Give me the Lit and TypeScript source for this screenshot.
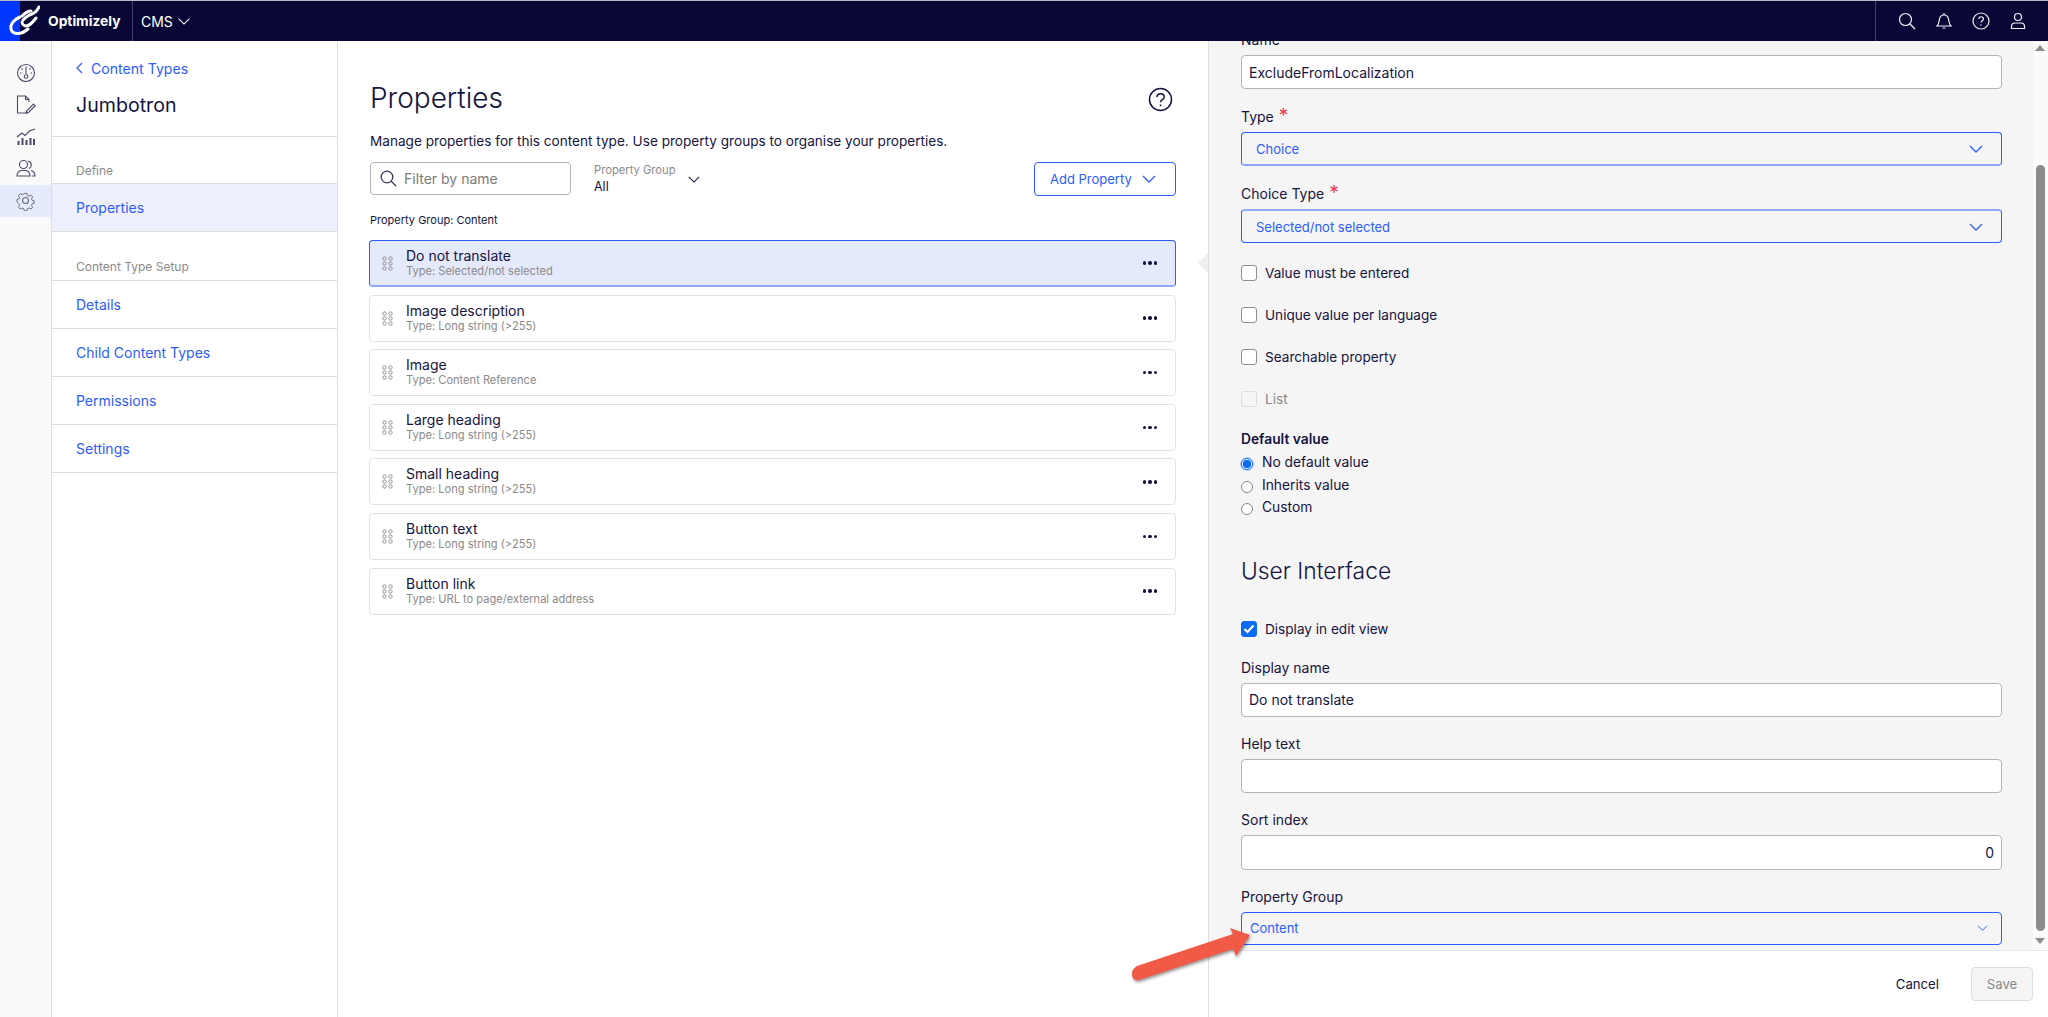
import { LitElement, css, html, svg } from "lit";
import { customElement } from "lit/decorators.js";

const rows = [
  ["Do not translate", "Type: Selected/not selected"],
  ["Image description", "Type: Long string (>255)"],
  ["Image", "Type: Content Reference"],
  ["Large heading", "Type: Long string (>255)"],
  ["Small heading", "Type: Long string (>255)"],
  ["Button text", "Type: Long string (>255)"],
  ["Button link", "Type: URL to page/external address"],
];

const chevron = (w: number, h: number) => html`<svg width=${w} height=${h} viewBox="0 0 14 8" fill="none" stroke="currentColor" stroke-width="1.3"><path d="M1 1l6 6 6-6" /></svg>`;

const railIcons = [
  svg`<circle cx="10" cy="10" r="8.5" /><path d="M10 3.500v7.500M4 10h1.500M14.500 10H16M5.500 5.500l1 1M14.500 5.500l-1 1" /><circle cx="10" cy="13.500" r="1.800" />`,
  svg`<path d="M13 7V4.500L9.500 1H1.500v17H12M9.500 1v3.500H13" /><path d="M11 15.500l-.8 2.500 2.500-.8 6.500-6.500-1.700-1.700z" />`,
  svg`<path d="M1 10l5-4 3 2.500L13.500 4 19 2" /><path d="M2.500 18v-4M6.500 18v-7M10.500 18v-5M14.500 18v-7M18 18v-6" stroke-width="2" />`,
  svg`<circle cx="7.500" cy="5.500" r="4" /><path d="M1 17c0-3.500 2-5 4-5.500h5c2 .5 4 2 4 5.500z" /><path d="M12 2a4 4 0 0 1 1 7.500M15 11.500c2 .5 4 2 4 5.500h-3" />`,
  svg`<circle cx="9.500" cy="9.500" r="3" /><path d="M8 1.500h3l.5 2.400 1.800.8 2.100-1.300 2 2.100-1.300 2 .8 1.800 2.100.5v2.800l-2.100.5-.8 1.800 1.300 2-2 2.100-2.100-1.300-1.800.8-.5 2.400H8l-.5-2.400-1.800-.8-2.100 1.300-2-2.100 1.300-2-.8-1.800L0 11V8.200l2.100-.5.8-1.800-1.300-2 2-2.100 2.100 1.300 1.800-.8z" transform="translate(1 1) scale(.9)" />`,
];

@customElement("app-root")
export class AppRoot extends LitElement {
  static styles = css`
    :host {
      display: flex;
      flex-direction: column;
      width: 2048px;
      height: 1017px;
      overflow: hidden;
      position: relative;
      font-family: Inter, "Noto Sans", sans-serif;
      font-size: 14px;
      color: #15143f;
      background: #fff;
    }

    svg {
      display: block;
      flex: none;
    }

    .topbar {
      flex: none;
      height: 40px;
      display: flex;
      align-items: center;
      background: #080736;
      border-top: 1px solid #b9b9c4;
      color: #fff;
    }

    .logo {
      width: 133px;
      height: 40px;
      display: flex;
      align-items: center;
      gap: 8px;
      background: linear-gradient(to right, #0037ff 20px, transparent 20px);
      border-right: 1px solid #45446a;
      box-sizing: border-box;
      font-weight: 700;
      font-size: 13.8px;
    }

    .product {
      display: flex;
      align-items: center;
      gap: 5px;
      margin-left: 8px;
      font-size: 14px;
    }

    .tools {
      margin-left: auto;
      height: 40px;
      width: 173px;
      box-sizing: border-box;
      border-left: 1px solid #45446a;
      display: flex;
      align-items: center;
      padding-left: 22px;
      gap: 19px;
      color: #f2f2f6;
    }

    .body {
      flex: 1;
      display: flex;
      min-height: 0;
    }

    .rail {
      flex: none;
      width: 52px;
      box-sizing: border-box;
      padding-top: 16px;
      background: #fafafa;
      border-right: 1px solid #dedede;
      color: #4a4a68;
    }

    .rail-item {
      height: 32px;
      display: flex;
      align-items: center;
      justify-content: center;
    }

    .rail-item.active {
      background: #e6ebfb;
      color: #6a6a80;
    }

    .side {
      flex: none;
      width: 286px;
      box-sizing: border-box;
      border-right: 1px solid #dedede;
    }

    .side-head {
      height: 96px;
      box-sizing: border-box;
      padding: 17px 24px 0 24px;
      border-bottom: 1px solid #dedede;
    }

    .back {
      display: flex;
      align-items: center;
      gap: 8px;
      height: 20px;
      color: #2d5cff;
      font-size: 14.1px;
    }

    .side-title {
      margin-top: 14px;
      font-size: 19.6px;
      line-height: 26px;
    }

    .side-label {
      height: 47px;
      box-sizing: border-box;
      padding: 26px 24px 0;
      font-size: 12px;
      line-height: 16px;
      color: #8a8a8a;
      border-bottom: 1px solid #dedede;
    }

    .side-label.second {
      margin-top: 23px;
      height: 26px;
      padding-top: 4px;
    }

    .side-link {
      height: 48px;
      box-sizing: border-box;
      display: flex;
      align-items: center;
      padding: 0 24px;
      color: #2d5cff;
      font-size: 14px;
      border-bottom: 1px solid #dedede;
    }

    .side-link.active {
      background: #eef1fd;
    }

    .main {
      flex: none;
      width: 870px;
      box-sizing: border-box;
      padding: 38px 32px 0 32px;
      position: relative;
    }

    .head {
      display: flex;
      align-items: center;
      justify-content: space-between;
      height: 40px;
    }

    h1 {
      margin: -2px 0 0;
      font-size: 28px;
      font-weight: 300;
      line-height: 40px;
    }

    .help {
      margin-right: 3px;
      color: #15143f;
    }

    .lead {
      margin-top: 12px;
      line-height: 20px;
      font-size: 13.6px;
    }

    .toolbar {
      margin-top: 11px;
      height: 34px;
      display: flex;
      align-items: flex-start;
    }

    .filter {
      width: 201px;
      height: 33px;
      box-sizing: border-box;
      border: 1px solid #b5b5b5;
      border-radius: 4px;
      display: flex;
      align-items: center;
      gap: 7px;
      padding-left: 9px;
      color: #7b7b7b;
      font-size: 14px;
    }

    .filter svg {
      color: #3a3a5c;
    }

    .group {
      margin-left: 23px;
      height: 34px;
      display: flex;
      align-items: center;
      gap: 12px;
    }

    .group small {
      display: block;
      font-size: 11.2px;
      line-height: 16px;
      color: #8a8a8a;
      margin-top: -1px;
    }

    .group span {
      display: block;
      font-size: 12.5px;
      line-height: 16px;
      margin-top: 1px;
    }

    .add {
      margin-left: auto;
      width: 142px;
      height: 34px;
      box-sizing: border-box;
      border: 1px solid #2d5cff;
      border-radius: 4px;
      display: flex;
      align-items: center;
      padding-left: 15px;
      gap: 10px;
      color: #2d5cff;
      font-size: 13px;
    }

    .group-title {
      margin-top: 16px;
      font-size: 11px;
      line-height: 16px;
    }

    .list {
      margin: 12px 0 0 -1px;
      display: flex;
      flex-direction: column;
      gap: 7.6px;
    }

    .row {
      height: 47px;
      box-sizing: border-box;
      display: flex;
      align-items: center;
      border: 1px solid #e2e2e2;
      border-radius: 4px;
      padding: 0 12px;
    }

    .row.selected {
      background: #e4e9fc;
      border-color: #2d5cff;
      border-bottom: 2px solid #8fa8ff;
    }

    .grip {
      color: #8f8f8f;
      margin-right: 13px;
    }

    .row-text {
      flex: 1;
      margin-top: -1px;
    }

    .row-name {
      font-size: 14px;
      line-height: 17px;
    }

    .row-type {
      font-size: 11.1px;
      line-height: 15px;
      color: #8a8a8a;
    }

    .dots {
      display: flex;
      gap: 2px;
      margin-right: 6px;
    }

    .dots i {
      width: 3.5px;
      height: 3.5px;
      border-radius: 50%;
      background: #15143f;
    }

    .notch {
      position: absolute;
      right: 0;
      top: 212px;
      border: 10px solid transparent;
      border-right-color: #efefef;
      border-left-width: 0;
    }

    .panel {
      flex: 1;
      min-width: 0;
      display: flex;
      flex-direction: column;
      border-left: 1px solid #dedede;
    }

    .scroller {
      flex: none;
      height: 909px;
      display: flex;
      overflow: hidden;
      background: #f5f5f5;
      border-bottom: 1px solid #e6e6e6;
    }

    .form {
      flex: none;
      width: 824px;
      box-sizing: border-box;
      padding: 0 31px 0 32px;
      margin-top: -11px;
    }

    .scrollbar {
      flex: 1;
      position: relative;
      background: #fafafa;
    }

    .thumb {
      position: absolute;
      left: 3px;
      top: 124px;
      width: 9px;
      height: 766px;
      border-radius: 5px;
      background: #8c8c8c;
    }

    .arrow-up,
    .arrow-down {
      position: absolute;
      left: 2px;
      border-left: 5.5px solid transparent;
      border-right: 5.5px solid transparent;
    }

    .arrow-up {
      top: 4px;
      border-bottom: 6px solid #8c8c8c;
    }

    .arrow-down {
      top: 897px;
      border-top: 6px solid #8c8c8c;
    }

    .field-label {
      height: 20px;
      line-height: 20px;
      margin-bottom: 5px;
      font-size: 14px;
    }

    .req {
      color: #f0354c;
      font-size: 19px;
      margin-left: 5px;
      line-height: 14px;
    }

    .control {
      height: 34px;
      box-sizing: border-box;
      background: #fff;
      border: 1px solid #b5b5b5;
      border-radius: 4px;
      display: flex;
      align-items: center;
      padding: 0 7px;
      margin-bottom: 17px;
      font-size: 14px;
    }

    .control.name {
      margin-bottom: 18px;
    }

    .control.number {
      justify-content: flex-end;
      height: 35px;
    }

    .control.select {
      background: transparent;
      border-color: #2d5cff;
      color: #2d5cff;
      font-size: 13px;
      padding: 0 18px 0 14px;
      margin-bottom: 18px;
      justify-content: space-between;
    }

    .control.soft-bottom {
      border-bottom: 2px solid #8fa8ff;
    }

    .control.soft-top {
      border-top: 2px solid #8fa8ff;
    }

    .control.tight {
      height: 33px;
      padding: 0 13px 0 8px;
      margin-bottom: 0;
      font-size: 13px;
    }

    .gap {
      height: 1px;
    }

    .check {
      height: 22px;
      display: flex;
      align-items: center;
      gap: 8px;
      margin-bottom: 20px;
      font-size: 13.6px;
    }

    .check i {
      width: 16px;
      height: 16px;
      box-sizing: border-box;
      background: #fff;
      border: 1px solid #8f8f8f;
      border-radius: 3px;
    }

    .check.disabled {
      color: #8a8a8a;
    }

    .check.disabled i {
      background: #f5f5f5;
      border-color: #dcdcdc;
    }

    .check.on i {
      background: #0b6bf2;
      border-color: #0b6bf2;
      display: flex;
      align-items: center;
      justify-content: center;
    }

    .default-title {
      margin-top: -1px;
      height: 20px;
      line-height: 20px;
      font-weight: 600;
      font-size: 13.8px;
    }

    .radio {
      height: 22.5px;
      display: flex;
      align-items: center;
      gap: 9px;
      font-size: 13.8px;
    }

    .radio.on {
      margin-top: 2px;
    }

    .radio i {
      width: 12px;
      height: 12px;
      box-sizing: border-box;
      margin-top: 4px;
      background: #fff;
      border: 1px solid #8a8a8a;
      border-radius: 50%;
    }

    .radio.on i {
      border: 1px solid #0b6bf2;
      background: radial-gradient(circle, #0b6bf2 4px, #fff 4.5px);
      box-shadow: 0 0 0 1px #a9c8fa;
    }

    h2 {
      margin: 37px 0 32px;
      font-size: 22.8px;
      font-weight: 300;
      line-height: 30px;
    }

    .check.display {
      margin-bottom: 18px;
    }

    .footer {
      flex: 1;
      display: flex;
      align-items: center;
      justify-content: flex-end;
      padding: 0 15px 0 0;
      gap: 32px;
      font-size: 13.2px;
    }

    .save {
      width: 62px;
      height: 34px;
      box-sizing: border-box;
      background: #f5f5f5;
      border: 1px solid #dedede;
      border-radius: 4px;
      color: #8a8a8a;
      display: flex;
      align-items: center;
      justify-content: center;
    }

    .callout {
      position: absolute;
      left: 1125px;
      top: 920px;
      filter: drop-shadow(1px 2px 1.5px rgba(0, 0, 0, 0.4));
    }
  `;

  private field(label: string, value: string, cls = "", required = false) {
    return html`
      <div class="field-label">${label}${required ? html`<span class="req">*</span>` : ""}</div>
      <div class="control ${cls}">
        <span>${value}</span>
        ${cls.includes("select") ? html`<span>${cls.includes("tight") ? chevron(11, 6) : chevron(14, 8)}</span>` : ""}
      </div>
    `;
  }

  private check(label: string, cls = "") {
    return html`<div class="check ${cls}"><i></i><span>${label}</span></div>`;
  }

  render() {
    return html`
      <header class="topbar">
        <div class="logo">
          <svg width="40" height="40" viewBox="0 0 40 40" fill="none" stroke="#fff" stroke-width="3" stroke-linecap="round">
            <path d="M20 16C13 19 10 24 11 28c1 5 9 7 17 0" />
            <path d="M39 6c-2 4-4 6-7 7-4 1-7 4-9 6" />
            <path d="M36 17c-3 4-6 7-9 8-3 0-5-2-5-4" />
            <path d="M22 15c3-3 6-5 9-5" />
          </svg>
          <span>Optimizely</span>
        </div>
        <div class="product">CMS ${chevron(12, 7)}</div>
        <div class="tools">
          <svg width="18" height="18" viewBox="0 0 18 18" fill="none" stroke="currentColor" stroke-width="1.2"><circle cx="7.5" cy="7.5" r="6" /><path d="M12 12l5 5" /></svg>
          <svg width="18" height="18" viewBox="0 0 18 18" fill="none" stroke="currentColor" stroke-width="1.2"><path d="M2 14c2-2 2-4 2.500-7C5 4 7 3 9 3s4 1 4.500 4c.5 3 .5 5 2.500 7z" /><path d="M9 3V1M7.500 16h3" /></svg>
          <svg width="18" height="18" viewBox="0 0 18 18" fill="none" stroke="currentColor" stroke-width="1.2"><circle cx="9" cy="9" r="8" /><path d="M6.800 7c0-3 4.600-3 4.600 0 0 1.800-2.400 1.800-2.400 3.600M9 12.200v1.200" /></svg>
          <svg width="18" height="18" viewBox="0 0 18 18" fill="none" stroke="currentColor" stroke-width="1.2"><circle cx="9" cy="5" r="3.500" /><path d="M2.500 16.500v-2c0-2 1.500-3.500 3.500-3.500h6c2 0 3.500 1.500 3.500 3.500v2z" /></svg>
        </div>
      </header>

      <div class="body">
        <nav class="rail">
          ${railIcons.map(
            (icon, i) => html`<div class="rail-item ${i === 4 ? "active" : ""}">
              <svg width="20" height="20" viewBox="0 0 20 20" fill="none" stroke="currentColor" stroke-width="1.1">${icon}</svg>
            </div>`,
          )}
        </nav>

        <aside class="side">
          <div class="side-head">
            <div class="back">
              <svg width="7" height="12" viewBox="0 0 7 12" fill="none" stroke="currentColor" stroke-width="1.2"><path d="M6 1L1 6l5 5" /></svg>
              Content Types
            </div>
            <div class="side-title">Jumbotron</div>
          </div>
          <div class="side-label">Define</div>
          <div class="side-link active">Properties</div>
          <div class="side-label second">Content Type Setup</div>
          <div class="side-link">Details</div>
          <div class="side-link">Child Content Types</div>
          <div class="side-link">Permissions</div>
          <div class="side-link">Settings</div>
        </aside>

        <main class="main">
          <div class="head">
            <h1>Properties</h1>
            <svg class="help" width="25" height="25" viewBox="0 0 25 25" fill="none" stroke="currentColor" stroke-width="1.5"><circle cx="12.5" cy="12.5" r="11" /><path d="M9 10c0-4.500 7.200-4.500 7.200 0 0 2.800-3.700 2.500-3.700 5.200M12.500 17.500v1.800" /></svg>
          </div>
          <div class="lead">Manage properties for this content type. Use property groups to organise your properties.</div>
          <div class="toolbar">
            <div class="filter">
              <svg width="17" height="17" viewBox="0 0 17 17" fill="none" stroke="currentColor" stroke-width="1.3"><circle cx="7" cy="7" r="5.800" /><path d="M11 11l5 5" /></svg>
              Filter by name
            </div>
            <div class="group">
              <div><small>Property Group</small><span>All</span></div>
              ${chevron(12, 7)}
            </div>
            <div class="add">Add Property ${chevron(14, 8)}</div>
          </div>
          <div class="group-title">Property Group: Content</div>
          <div class="list">
            ${rows.map(
              ([name, type], i) => html`<div class="row ${i === 0 ? "selected" : ""}">
                <svg class="grip" width="11" height="15" viewBox="0 0 11 15" fill="none" stroke="currentColor" stroke-width="1"><circle cx="2.500" cy="2.500" r="1.700" /><circle cx="8.500" cy="2.500" r="1.700" /><circle cx="2.500" cy="7.500" r="1.700" /><circle cx="8.500" cy="7.500" r="1.700" /><circle cx="2.500" cy="12.500" r="1.700" /><circle cx="8.500" cy="12.500" r="1.700" /></svg>
                <div class="row-text">
                  <div class="row-name">${name}</div>
                  <div class="row-type">${type}</div>
                </div>
                <div class="dots"><i></i><i></i><i></i></div>
              </div>`,
            )}
          </div>
          <div class="notch"></div>
        </main>

        <section class="panel">
          <div class="scroller">
            <div class="form">
              ${this.field("Name", "ExcludeFromLocalization", "name")}
              ${this.field("Type", "Choice", "select soft-bottom", true)}
              ${this.field("Choice Type", "Selected/not selected", "select soft-top", true)}
              <div class="gap"></div>
              ${this.check("Value must be entered")} ${this.check("Unique value per language")}
              ${this.check("Searchable property")} ${this.check("List", "disabled")}
              <div class="default-title">Default value</div>
              <div class="radio on"><i></i><span>No default value</span></div>
              <div class="radio"><i></i><span>Inherits value</span></div>
              <div class="radio"><i></i><span>Custom</span></div>
              <h2>User Interface</h2>
              <div class="check on display">
                <i><svg width="12" height="10" viewBox="0 0 12 10" fill="none" stroke="#fff" stroke-width="2.2"><path d="M1.500 5l3 3 6-6.500" /></svg></i>
                <span>Display in edit view</span>
              </div>
              ${this.field("Display name", "Do not translate")} ${this.field("Help text", "")}
              ${this.field("Sort index", "0", "number")}
              ${this.field("Property Group", "Content", "select tight")}
            </div>
            <div class="scrollbar">
              <div class="arrow-up"></div>
              <div class="thumb"></div>
              <div class="arrow-down"></div>
            </div>
          </div>
          <div class="footer">
            <span>Cancel</span>
            <div class="save">Save</div>
          </div>
        </section>
      </div>

      <svg class="callout" width="135" height="65" viewBox="0 0 135 65" fill="#f15a47">
        <path d="M12 46l96-32-3-6 20 7-14 21-3-7-94 31c-5 1-7-2-7-7 0-3 2-5 5-7z" />
      </svg>
    `;
  }
}
